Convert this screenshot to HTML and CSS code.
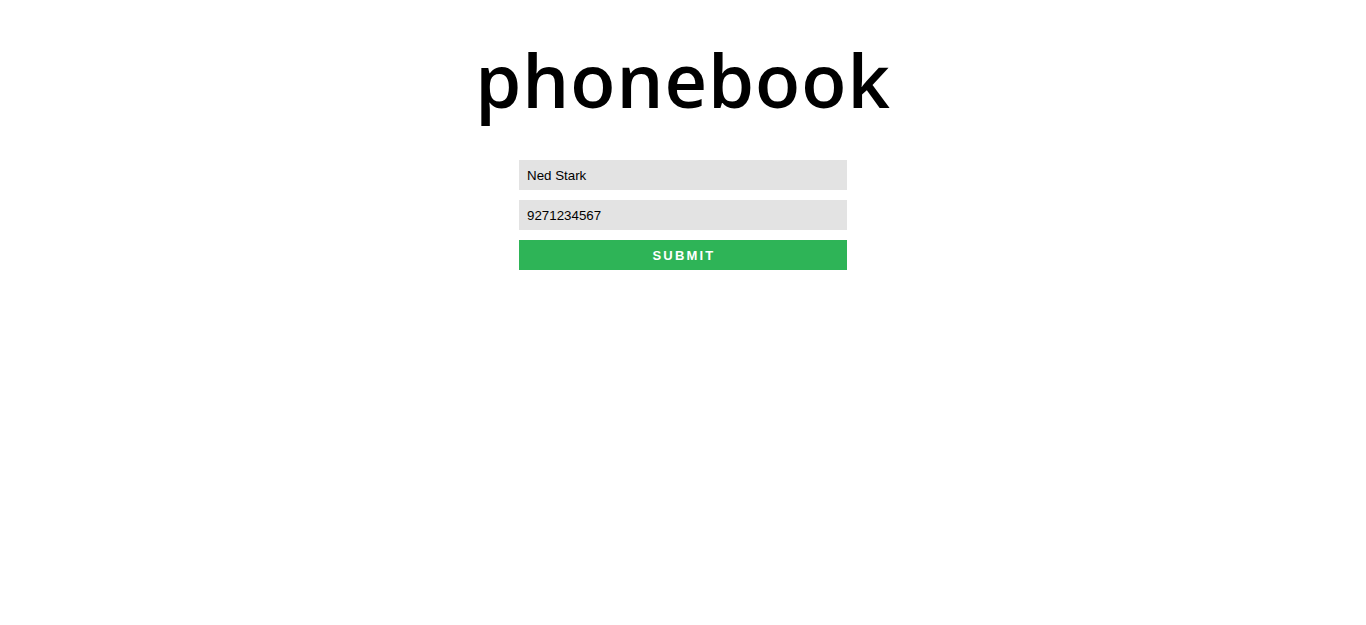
FILE: index.html
```html
<!DOCTYPE html>
<html>
<head>
<meta charset="utf-8">
<link rel="stylesheet" href="styles.css">
</head>
<body>
<div class="app">
  <h1 class="title">phonebook</h1>
  <form class="form">
    <input class="field" type="text" value="Ned Stark">
    <input class="field" type="text" value="9271234567">
    <button class="submit" type="button">SUBMIT</button>
  </form>
</div>
</body>
</html>
```
FILE: styles.css
```css
html, body {
  margin: 0;
  padding: 0;
  background: #fff;
}
.app {
  display: flex;
  flex-direction: column;
  align-items: center;
  padding-top: 27px;
}
.title {
  margin: 0;
  font-family: "Open Sans", "Liberation Sans", Arial, sans-serif;
  font-weight: 600;
  font-size: 74px;
  line-height: 106px;
  letter-spacing: 1px;
  color: #000;
}
.form {
  display: flex;
  flex-direction: column;
  gap: 10px;
  width: 328px;
  margin-top: 27px;
}
.field {
  box-sizing: border-box;
  height: 30px;
  border: none;
  outline: none;
  background: #e3e3e3;
  padding: 0 8px;
  font-family: "Liberation Sans", Arial, sans-serif;
  font-size: 13.33px;
  color: #000;
}
.submit {
  height: 30px;
  border: none;
  background: #2eb457;
  color: #fff;
  font-family: "Liberation Sans", Arial, sans-serif;
  font-weight: bold;
  font-size: 13px;
  letter-spacing: 2.2px;
  padding: 0 0 0 2px;
}
```
